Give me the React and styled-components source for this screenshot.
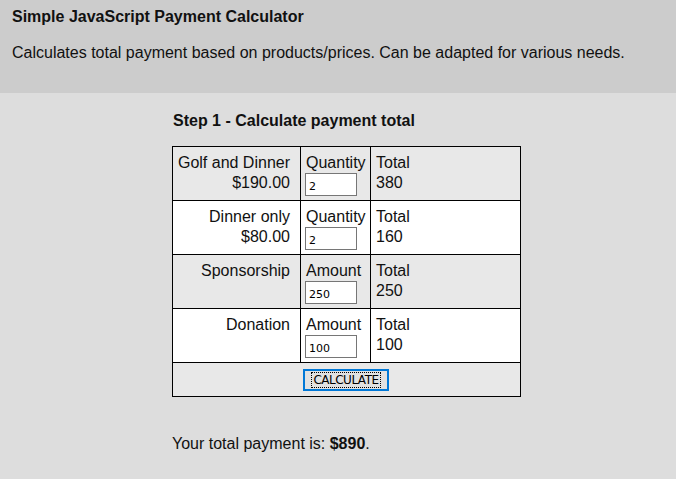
import React from "react";
import styled, { createGlobalStyle } from "styled-components";

const items = [
  { name: "Golf and Dinner", price: "$190.00", kind: "Quantity", value: "2", total: "380" },
  { name: "Dinner only", price: "$80.00", kind: "Quantity", value: "2", total: "160" },
  { name: "Sponsorship", kind: "Amount", value: "250", total: "250" },
  { name: "Donation", kind: "Amount", value: "100", total: "100" },
];

function App() {
  return (
    <Page>
      <GlobalStyle />
      <Header>
        <Title>Simple JavaScript Payment Calculator</Title>
        <Intro>Calculates total payment based on products/prices. Can be adapted for various needs.</Intro>
      </Header>
      <Main>
        <Step>Step 1 - Calculate payment total</Step>
        <Table>
          <tbody>
            {items.map((item, i) => (
              <Row key={item.name} $shade={i % 2 === 0}>
                <NameCell>
                  {item.name}
                  {item.price && (
                    <>
                      <br />
                      {item.price}
                    </>
                  )}
                </NameCell>
                <FieldCell>
                  {item.kind}
                  <br />
                  <Input type="text" defaultValue={item.value} />
                </FieldCell>
                <TotalCell>
                  Total
                  <br />
                  {item.total}
                </TotalCell>
              </Row>
            ))}
            <Row $shade>
              <ButtonCell colSpan={3}>
                <Calc>
                  <CalcLabel>CALCULATE</CalcLabel>
                </Calc>
              </ButtonCell>
            </Row>
          </tbody>
        </Table>
        <Result>
          Your total payment is: <b>$890</b>.
        </Result>
      </Main>
    </Page>
  );
}

export default App;

const GlobalStyle = createGlobalStyle`
  html, body {
    margin: 0;
    padding: 0;
    background: #dddddd;
  }
  body {
    font-family: "Liberation Sans", Arial, sans-serif;
    color: #111;
  }
`;

const Page = styled.div`
  min-height: 479px;
  background: #dddddd;
`;
const Header = styled.div`
  background: #cccccc;
  height: 93px;
  padding: 8px 12px 0;
  box-sizing: border-box;
`;
const Title = styled.h1`
  margin: 0;
  font-size: 16px;
  line-height: 18px;
  font-weight: bold;
`;
const Intro = styled.p`
  margin: 18px 0 0;
  font-size: 16px;
  line-height: 18px;
`;
const Main = styled.div`
  padding: 18px 0 0 172px;
`;
const Step = styled.h2`
  margin: 0 0 15px 1px;
  font-size: 16px;
  line-height: 20px;
  font-weight: bold;
`;
const Table = styled.table`
  border-collapse: collapse;
  width: 349px;
  font-size: 16px;
  line-height: 20px;
`;
const Row = styled.tr`
  background: ${(p) => (p.$shade ? "#e8e8e8" : "#ffffff")};
`;
const Cell = styled.td`
  box-sizing: content-box;
  border: 1px solid #000;
  vertical-align: top;
  padding: 6px 5px 4px;
  height: 43px;
  white-space: nowrap;
`;
const NameCell = styled(Cell)`
  width: 113px;
  text-align: right;
  padding-left: 4px;
  padding-right: 10px;
`;
const FieldCell = styled(Cell)`
  width: 63px;
  padding-left: 5px;
  padding-right: 1px;
`;
const TotalCell = styled(Cell)`
  padding-left: 5px;
`;
const ButtonCell = styled(Cell)`
  height: 22px;
  padding: 6px 0 5px;
  text-align: center;
  line-height: 0;
`;
const Input = styled.input`
  box-sizing: border-box;
  width: 52px;
  height: 23px;
  margin: 0 0 0 -1px;
  padding: 3px 3px 0;
  border: 1px solid #767676;
  background: #fff;
  font-family: "DejaVu Sans", Verdana, sans-serif;
  font-size: 11px;
  color: #000;
  vertical-align: top;
`;
const Calc = styled.button`
  box-sizing: border-box;
  width: 86px;
  height: 22px;
  margin: 0 0 0 -1px;
  padding: 2px;
  border: 2px solid #0078d7;
  background: #e1e1e1;
  font-family: "DejaVu Sans", Verdana, sans-serif;
  font-size: 12px;
  color: #000;
  display: inline-flex;
  align-items: center;
  justify-content: center;
  vertical-align: top;
`;
const CalcLabel = styled.span`
  outline: 1px dotted #000;
  padding: 0 1px;
  letter-spacing: -0.5px;
  line-height: 14px;
`;
const Result = styled.p`
  margin: 37px 0 0;
  font-size: 16px;
  line-height: 20px;
`;
